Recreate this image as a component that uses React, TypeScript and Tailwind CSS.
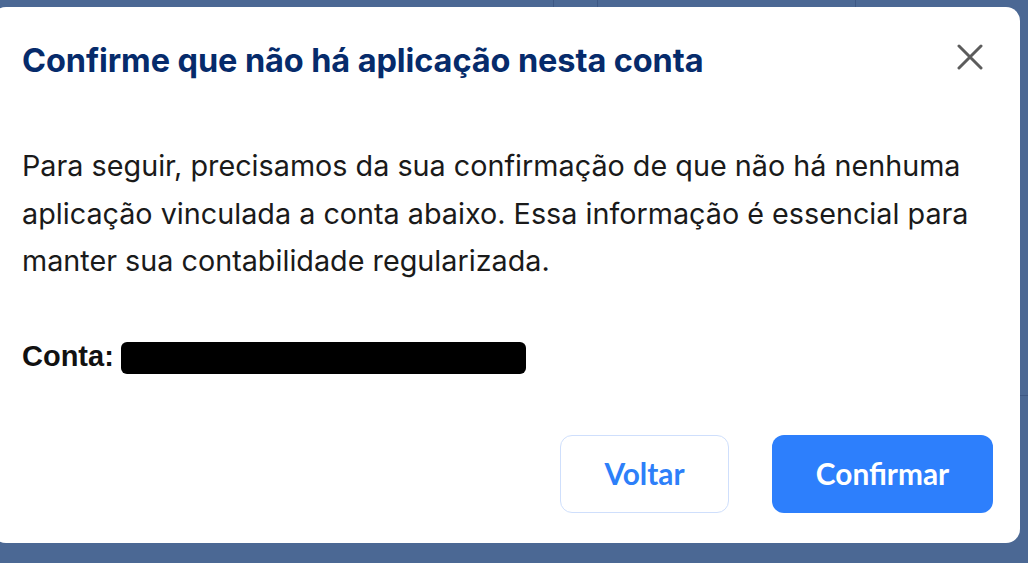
import React from "react";

export default function App() {
  return (
    <div className="relative w-[1028px] h-[563px] overflow-hidden bg-[#4b6894]">
      {/* faint background table lines (visible only above the modal) */}
      <div className="absolute left-0 right-0 top-0 h-[10px] flex">
        <div className="w-[553px] h-full" />
        <div className="w-[44px] h-full border-l border-[#3e5884]" />
        <div className="w-[258px] h-full border-l border-[#3e5884]" />
        <div className="flex-1 h-full border-l border-[#3e5884]" />
      </div>
      <div className="absolute left-[1020px] right-0 top-[395px] border-t border-[#3e5884]" />

      {/* modal */}
      <div
        className="absolute left-[-8px] top-[7px] w-[1028px] h-[536px] bg-white rounded-[14px] pl-[30px] pr-[27px] flex flex-col"
        style={{ fontFamily: "Inter, 'Noto Sans', sans-serif" }}
      >
        <div className="pt-[34px]">
          <h1 className="text-[32.5px] leading-[40px] font-bold text-[#062b6b] tracking-[-0.1px] whitespace-nowrap">
            Confirme que não há aplicação nesta conta
          </h1>
        </div>
        <button className="absolute left-[958px] top-[30px] w-[40px] h-[40px] flex items-center justify-center">
          <svg width="26" height="26" viewBox="0 0 26 26" fill="none">
            <path d="M2 2L24 24M24 2L2 24" stroke="#5c5c5c" strokeWidth="3" strokeLinecap="round" />
          </svg>
        </button>

        <p className="mt-[61px] text-[28.75px] leading-[47.5px] text-[#1a1a1a] whitespace-nowrap">
          Para seguir, precisamos da sua confirmação de que não há nenhuma
          <br />
          aplicação vinculada a conta abaixo. Essa informação é essencial para
          <br />
          manter sua contabilidade regularizada.
        </p>

        <div className="mt-[57px] flex items-center h-[32px]">
          <span
            className="text-[29px] leading-[32px] font-bold text-[#111] mt-[-3px]"
            style={{ fontFamily: "'Liberation Sans', Arial, sans-serif" }}
          >
            Conta:
          </span>
          <span className="ml-[7px] w-[405px] h-[32px] bg-black rounded-[6px]" />
        </div>

        <div
          className="mt-[61px] flex justify-end gap-[43px]"
          style={{ fontFamily: "Lato, 'Noto Sans', sans-serif" }}
        >
          <button className="w-[169px] h-[78px] rounded-[12px] border border-[#cfdffc] bg-white text-[#2d7ff9] text-[29.8px] font-bold pt-[2px]">
            Voltar
          </button>
          <button className="w-[221px] h-[78px] rounded-[12px] bg-[#2d7ffc] text-white text-[29.8px] font-bold pt-[2px]">
            Confirmar
          </button>
        </div>
      </div>
    </div>
  );
}
